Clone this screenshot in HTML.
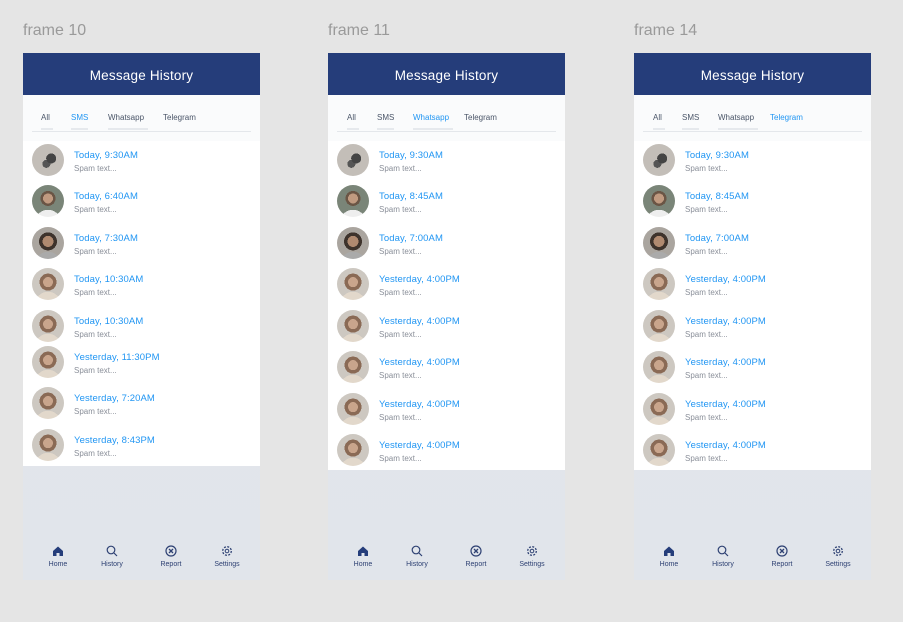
<!DOCTYPE html>
<html><head><meta charset="utf-8"><style>
*{margin:0;padding:0;box-sizing:border-box}
body{width:903px;height:622px;background:#e5e5e5;font-family:"Liberation Sans",sans-serif;position:relative;overflow:hidden}
.lbl{position:absolute;top:22px;font-size:16px;color:#9a9a9a}
.f{position:absolute;top:53px;width:237px;height:527px;background:linear-gradient(#e3e6ea,#e1e5eb)}
.hd{position:absolute;left:0;top:0;width:237px;height:42px;background:#253d7a;color:#fff;font-size:13.5px;text-align:center;line-height:46px;letter-spacing:.2px}
.tabs{position:absolute;left:0;top:42px;width:237px;height:46px;background:#fafbfc}
.tabs span{position:absolute;top:18px;font-size:8px;color:#4a5568}
.tabs span.a{color:#2196f3}
.tabs i{position:absolute;top:33px;height:2px;background:#e6e9ed}
.tabs b{position:absolute;left:9px;right:9px;top:36px;height:1px;background:#e4e7eb}
.list{position:absolute;left:0;top:88px;width:237px;background:#fff}
.av{position:absolute;left:9px;width:32px;height:32px;border-radius:50%;background:radial-gradient(circle at 50% 44%,#c9a58c 0 5px,#8a6a55 5px 8.5px,transparent 8.5px),radial-gradient(circle at 50% 115%,#e2d8cb 0 13px,transparent 13px),#cdc8c1}
.av.g{background:radial-gradient(circle at 60% 45%,#444 0 5px,transparent 5px),radial-gradient(circle at 45% 62%,#555 0 4px,transparent 4px),#c3beb8}
.av.m{background:radial-gradient(circle at 50% 42%,#c09a80 0 5px,#6a5545 5px 7.5px,transparent 7.5px),radial-gradient(circle at 50% 118%,#eee 0 13px,transparent 13px),#7a8578}
.av.d{background:radial-gradient(circle at 50% 45%,#b08a70 0 5.5px,#3e332c 5.5px 9px,transparent 9px),radial-gradient(circle at 50% 118%,#aaa 0 13px,transparent 13px),#aaa59f}
.t{position:absolute;left:51px;font-size:9.5px;color:#2196f3;letter-spacing:.1px;margin-top:1px}
.s{position:absolute;left:51px;font-size:8px;color:#8a8f99;margin-top:1px}
.nav{position:absolute;top:492px;width:40px;text-align:center;font-size:7px;color:#2e4173}
.nav svg{display:block;margin:0 auto 4px}
</style></head><body>
<div class="lbl" style="left:23px">frame 10</div>
<div class="lbl" style="left:328px">frame 11</div>
<div class="lbl" style="left:634px">frame 14</div>

<div class="f" style="left:23px">
<div class="hd">Message History</div>
<div class="tabs"><span style="left:18px">All</span><span class="a" style="left:48px">SMS</span><span style="left:85px">Whatsapp</span><span style="left:140px">Telegram</span>
<i style="left:18px;width:12px"></i><i style="left:48px;width:17px"></i><i style="left:85px;width:40px"></i><b></b></div>
<div class="list" style="height:325px">
<div class="av g" style="top:3px"></div><div class="t" style="top:8px">Today, 9:30AM</div><div class="s" style="top:22px">Spam text...</div>
<div class="av m" style="top:44px"></div><div class="t" style="top:49px">Today, 6:40AM</div><div class="s" style="top:63px">Spam text...</div>
<div class="av d" style="top:86px"></div><div class="t" style="top:91px">Today, 7:30AM</div><div class="s" style="top:105px">Spam text...</div>
<div class="av" style="top:127px"></div><div class="t" style="top:132px">Today, 10:30AM</div><div class="s" style="top:146px">Spam text...</div>
<div class="av" style="top:169px"></div><div class="t" style="top:174px">Today, 10:30AM</div><div class="s" style="top:188px">Spam text...</div>
<div class="av" style="top:205px"></div><div class="t" style="top:210px">Yesterday, 11:30PM</div><div class="s" style="top:224px">Spam text...</div>
<div class="av" style="top:246px"></div><div class="t" style="top:251px">Yesterday, 7:20AM</div><div class="s" style="top:265px">Spam text...</div>
<div class="av" style="top:288px"></div><div class="t" style="top:293px">Yesterday, 8:43PM</div><div class="s" style="top:307px">Spam text...</div>
</div>
<div class="nav" style="left:15px"><svg width="12" height="12" viewBox="0 0 12 12"><path d="M1 6L6 1.5 11 6V11H7.5V8H4.5V11H1Z" fill="#253d7a"/></svg>Home</div>
<div class="nav" style="left:69px"><svg width="12" height="12" viewBox="0 0 12 12"><circle cx="5" cy="5" r="3.8" fill="none" stroke="#2e4173" stroke-width="1.2"/><path d="M8 8L11 11" stroke="#2e4173" stroke-width="1.2"/></svg>History</div>
<div class="nav" style="left:128px"><svg width="12" height="12" viewBox="0 0 12 12"><circle cx="6" cy="6" r="5" fill="none" stroke="#2e4173" stroke-width="1.2"/><path d="M4 4L8 8M8 4L4 8" stroke="#2e4173" stroke-width="1.3"/></svg>Report</div>
<div class="nav" style="left:184px"><svg width="12" height="12" viewBox="0 0 12 12"><circle cx="6" cy="6" r="4.3" fill="none" stroke="#2e4173" stroke-width="1.3" stroke-dasharray="2 1.4"/><circle cx="6" cy="6" r="1.8" fill="none" stroke="#2e4173" stroke-width="1"/></svg>Settings</div>
</div>

<div class="f" style="left:328px">
<div class="hd">Message History</div>
<div class="tabs"><span style="left:19px">All</span><span style="left:49px">SMS</span><span class="a" style="left:85px">Whatsapp</span><span style="left:136px">Telegram</span>
<i style="left:19px;width:12px"></i><i style="left:49px;width:17px"></i><i style="left:85px;width:40px"></i><b></b></div>
<div class="list" style="height:329px">
<div class="av g" style="top:3px"></div><div class="t" style="top:8px">Today, 9:30AM</div><div class="s" style="top:22px">Spam text...</div>
<div class="av m" style="top:44px"></div><div class="t" style="top:49px">Today, 8:45AM</div><div class="s" style="top:63px">Spam text...</div>
<div class="av d" style="top:86px"></div><div class="t" style="top:91px">Today, 7:00AM</div><div class="s" style="top:105px">Spam text...</div>
<div class="av" style="top:127px"></div><div class="t" style="top:132px">Yesterday, 4:00PM</div><div class="s" style="top:146px">Spam text...</div>
<div class="av" style="top:169px"></div><div class="t" style="top:174px">Yesterday, 4:00PM</div><div class="s" style="top:188px">Spam text...</div>
<div class="av" style="top:210px"></div><div class="t" style="top:215px">Yesterday, 4:00PM</div><div class="s" style="top:229px">Spam text...</div>
<div class="av" style="top:252px"></div><div class="t" style="top:257px">Yesterday, 4:00PM</div><div class="s" style="top:271px">Spam text...</div>
<div class="av" style="top:293px"></div><div class="t" style="top:298px">Yesterday, 4:00PM</div><div class="s" style="top:312px">Spam text...</div>
</div>
<div class="nav" style="left:15px"><svg width="12" height="12" viewBox="0 0 12 12"><path d="M1 6L6 1.5 11 6V11H7.5V8H4.5V11H1Z" fill="#253d7a"/></svg>Home</div>
<div class="nav" style="left:69px"><svg width="12" height="12" viewBox="0 0 12 12"><circle cx="5" cy="5" r="3.8" fill="none" stroke="#2e4173" stroke-width="1.2"/><path d="M8 8L11 11" stroke="#2e4173" stroke-width="1.2"/></svg>History</div>
<div class="nav" style="left:128px"><svg width="12" height="12" viewBox="0 0 12 12"><circle cx="6" cy="6" r="5" fill="none" stroke="#2e4173" stroke-width="1.2"/><path d="M4 4L8 8M8 4L4 8" stroke="#2e4173" stroke-width="1.3"/></svg>Report</div>
<div class="nav" style="left:184px"><svg width="12" height="12" viewBox="0 0 12 12"><circle cx="6" cy="6" r="4.3" fill="none" stroke="#2e4173" stroke-width="1.3" stroke-dasharray="2 1.4"/><circle cx="6" cy="6" r="1.8" fill="none" stroke="#2e4173" stroke-width="1"/></svg>Settings</div>
</div>

<div class="f" style="left:634px">
<div class="hd">Message History</div>
<div class="tabs"><span style="left:19px">All</span><span style="left:48px">SMS</span><span style="left:84px">Whatsapp</span><span class="a" style="left:136px">Telegram</span>
<i style="left:19px;width:12px"></i><i style="left:48px;width:17px"></i><i style="left:84px;width:40px"></i><b></b></div>
<div class="list" style="height:329px">
<div class="av g" style="top:3px"></div><div class="t" style="top:8px">Today, 9:30AM</div><div class="s" style="top:22px">Spam text...</div>
<div class="av m" style="top:44px"></div><div class="t" style="top:49px">Today, 8:45AM</div><div class="s" style="top:63px">Spam text...</div>
<div class="av d" style="top:86px"></div><div class="t" style="top:91px">Today, 7:00AM</div><div class="s" style="top:105px">Spam text...</div>
<div class="av" style="top:127px"></div><div class="t" style="top:132px">Yesterday, 4:00PM</div><div class="s" style="top:146px">Spam text...</div>
<div class="av" style="top:169px"></div><div class="t" style="top:174px">Yesterday, 4:00PM</div><div class="s" style="top:188px">Spam text...</div>
<div class="av" style="top:210px"></div><div class="t" style="top:215px">Yesterday, 4:00PM</div><div class="s" style="top:229px">Spam text...</div>
<div class="av" style="top:252px"></div><div class="t" style="top:257px">Yesterday, 4:00PM</div><div class="s" style="top:271px">Spam text...</div>
<div class="av" style="top:293px"></div><div class="t" style="top:298px">Yesterday, 4:00PM</div><div class="s" style="top:312px">Spam text...</div>
</div>
<div class="nav" style="left:15px"><svg width="12" height="12" viewBox="0 0 12 12"><path d="M1 6L6 1.5 11 6V11H7.5V8H4.5V11H1Z" fill="#253d7a"/></svg>Home</div>
<div class="nav" style="left:69px"><svg width="12" height="12" viewBox="0 0 12 12"><circle cx="5" cy="5" r="3.8" fill="none" stroke="#2e4173" stroke-width="1.2"/><path d="M8 8L11 11" stroke="#2e4173" stroke-width="1.2"/></svg>History</div>
<div class="nav" style="left:128px"><svg width="12" height="12" viewBox="0 0 12 12"><circle cx="6" cy="6" r="5" fill="none" stroke="#2e4173" stroke-width="1.2"/><path d="M4 4L8 8M8 4L4 8" stroke="#2e4173" stroke-width="1.3"/></svg>Report</div>
<div class="nav" style="left:184px"><svg width="12" height="12" viewBox="0 0 12 12"><circle cx="6" cy="6" r="4.3" fill="none" stroke="#2e4173" stroke-width="1.3" stroke-dasharray="2 1.4"/><circle cx="6" cy="6" r="1.8" fill="none" stroke="#2e4173" stroke-width="1"/></svg>Settings</div>
</div>
</body></html>
